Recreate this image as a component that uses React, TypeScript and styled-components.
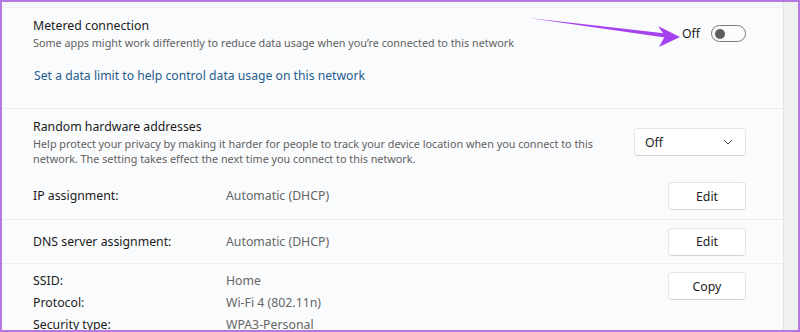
import React from "react";
import styled, { createGlobalStyle } from "styled-components";

const Global = createGlobalStyle`
  html, body { margin: 0; padding: 0; background: #f6f7f9; }
  * { box-sizing: border-box; }
`;

const FONT = `"Noto Sans", "Open Sans", sans-serif`;

const Frame = styled.div`
  position: relative;
  width: 800px;
  height: 332px;
  border: 2px solid #b777e0;
  overflow: hidden;
  display: flex;
  background: #f6f7f9;
  font-family: ${FONT};
`;

const Main = styled.div`
  flex: 1;
  display: flex;
  flex-direction: column;
  padding-top: 5px;
`;

const Strip = styled.div`
  width: 15px;
  background: #eef1f0;
  border-left: 1px solid #e2e5e4;
`;

const Card = styled.section<{ $h: number; $pt: number }>`
  flex-shrink: 0;
  height: ${(p) => p.$h}px;
  padding: ${(p) => p.$pt}px 37px 0 31px;
  background: #fafbfc;
  border-top: 1px solid #ebedef;
  display: flex;
  flex-direction: column;
`;

const Row = styled.div<{ $h?: number; $mt?: number; $top?: boolean }>`
  display: flex;
  align-items: ${(p) => (p.$top ? "flex-start" : "center")};
  justify-content: space-between;
  ${(p) => (p.$h ? `height: ${p.$h}px;` : "")}
  ${(p) => (p.$mt ? `margin-top: ${p.$mt}px;` : "")}
`;

const TextBlock = styled.div`
  display: flex;
  flex-direction: column;
`;

const Title = styled.div`
  font-size: 12.3px;
  line-height: 18px;
  color: #1b1b1b;
`;

const Desc = styled.div<{ $w?: number }>`
  font-size: 10.8px;
  line-height: 15px;
  color: #616161;
  ${(p) => (p.$w ? `width: ${p.$w}px;` : "")}
`;

const Link = styled.a`
  font-size: 12.2px;
  line-height: 17px;
  color: #1f5d8f;
  text-decoration: none;
  margin-top: 17px;
  margin-left: 1px;
`;

const ToggleWrap = styled.div`
  display: flex;
  align-items: center;
  gap: 11px;
  font-size: 12.3px;
  color: #1b1b1b;
`;

const Toggle = styled.div`
  width: 35px;
  height: 17px;
  border: 1px solid #7a7a7a;
  border-radius: 9px;
  display: flex;
  align-items: center;
  padding-left: 3px;
  background: #fbfbfb;
`;

const Knob = styled.div`
  width: 10px;
  height: 10px;
  border-radius: 50%;
  background: #5d5d5d;
`;

const Select = styled.div`
  width: 112px;
  height: 28px;
  background: #ffffff;
  border: 1px solid #e5e5e5;
  border-bottom-color: #d6d6d6;
  border-radius: 4px;
  display: flex;
  align-items: center;
  justify-content: space-between;
  padding: 0 12px 0 10px;
  font-size: 12.3px;
  color: #1b1b1b;
`;

const Button = styled.button<{ $mt?: number }>`
  width: 78px;
  height: 28px;
  background: #ffffff;
  border: 1px solid #e5e5e5;
  border-bottom-color: #d4d4d4;
  border-radius: 4px;
  font-family: ${FONT};
  font-size: 12.3px;
  color: #1b1b1b;
  padding: 0;
  ${(p) => (p.$mt ? `margin-top: ${p.$mt}px;` : "")}
`;

const Pair = styled.div`
  display: grid;
  grid-template-columns: 193px auto;
  font-size: 12.3px;
  line-height: 22px;
`;

const Label = styled.span`
  color: #1b1b1b;
`;

const Value = styled.span`
  color: #666666;
`;

const Arrow = styled.svg`
  position: absolute;
  left: 0;
  top: 0;
  pointer-events: none;
`;

export default function App() {
  return (
    <>
      <Global />
      <Frame>
        <Main>
          <Card $h={101} $pt={9}>
            <Row>
              <TextBlock>
                <Title>Metered connection</Title>
                <Desc>Some apps might work differently to reduce data usage when you’re connected to this network</Desc>
              </TextBlock>
              <ToggleWrap>
                Off
                <Toggle>
                  <Knob />
                </Toggle>
              </ToggleWrap>
            </Row>
            <Link>Set a data limit to help control data usage on this network</Link>
          </Card>
          <Card $h={111} $pt={9}>
            <Row>
              <TextBlock>
                <Title>Random hardware addresses</Title>
                <Desc $w={575}>
                  Help protect your privacy by making it harder for people to track your device location when you connect to this network. The setting takes effect the next time you connect to this network.
                </Desc>
              </TextBlock>
              <Select>
                Off
                <svg width="10" height="6" viewBox="0 0 10 6">
                  <path d="M1 1l4 4 4-4" fill="none" stroke="#555" strokeWidth="1" />
                </svg>
              </Select>
            </Row>
            <Row $h={28} $mt={16}>
              <Pair>
                <Label>IP assignment:</Label>
                <Value>Automatic (DHCP)</Value>
              </Pair>
              <Button>Edit</Button>
            </Row>
          </Card>
          <Card $h={44} $pt={0}>
            <Row $h={43}>
              <Pair>
                <Label>DNS server assignment:</Label>
                <Value>Automatic (DHCP)</Value>
              </Pair>
              <Button>Edit</Button>
            </Row>
          </Card>
          <Card $h={80} $pt={6}>
            <Row $top>
              <Pair>
                <Label>SSID:</Label>
                <Value>Home</Value>
                <Label>Protocol:</Label>
                <Value>Wi-Fi 4 (802.11n)</Value>
                <Label>Security type:</Label>
                <Value>WPA3-Personal</Value>
              </Pair>
              <Button $mt={2}>Copy</Button>
            </Row>
          </Card>
        </Main>
        <Strip />
        <Arrow width="800" height="332" viewBox="0 0 800 332">
          <path d="M527 16 L664 31.5 L663 35.5 Z" fill="#a641f0" />
          <path d="M656 24 L678 35 L657 45 L663 34 Z" fill="#a641f0" />
        </Arrow>
      </Frame>
    </>
  );
}
